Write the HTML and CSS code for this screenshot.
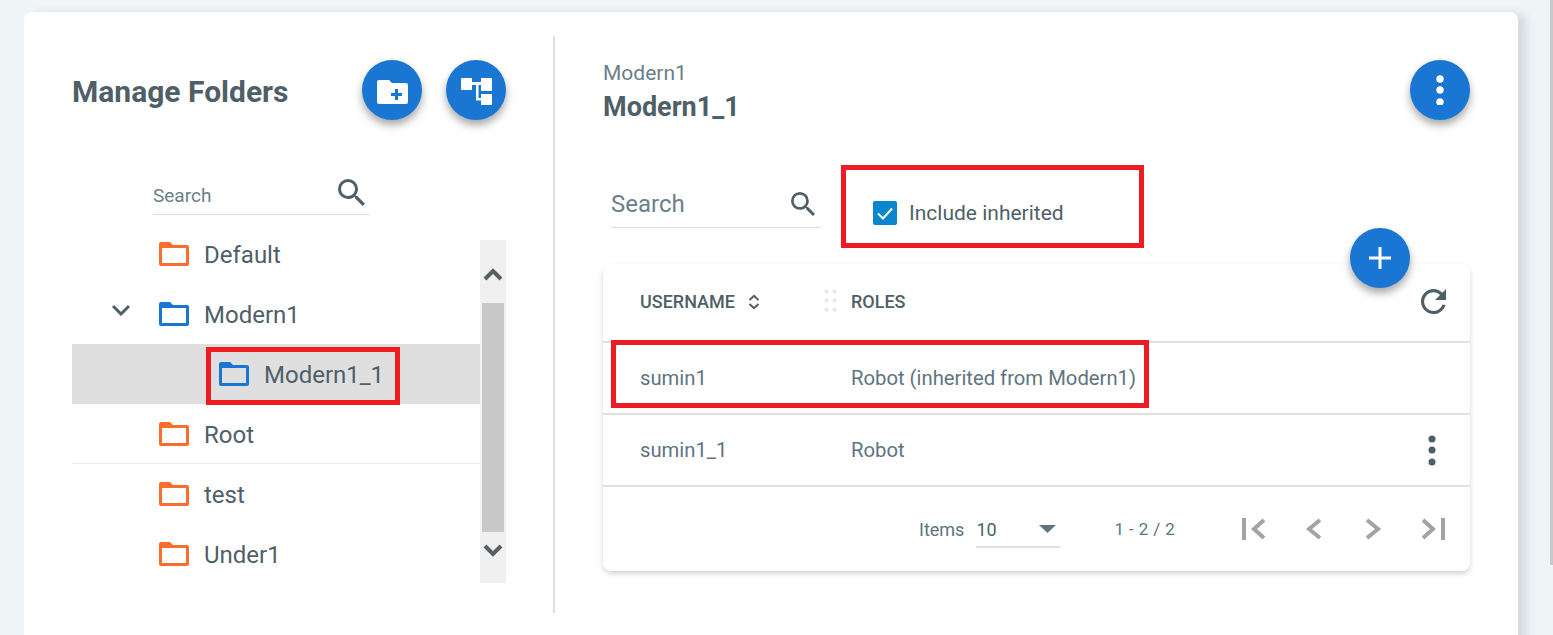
FILE: index.html
```html
<!DOCTYPE html>
<html lang="en">
<head>
<meta charset="utf-8">
<title>Manage Folders</title>
<link rel="stylesheet" href="styles.css">
</head>
<body>
<svg class="defs" width="0" height="0" aria-hidden="true">
  <symbol id="folder" viewBox="0 0 30 24"><path fill-rule="evenodd" d="M2 0h9l3 3h14a2 2 0 0 1 2 2v17a2 2 0 0 1-2 2H2a2 2 0 0 1-2-2V2a2 2 0 0 1 2-2zM3 6v15h24V6z"/></symbol>
  <symbol id="search" viewBox="3 3 17.5 17.5"><path d="M15.5 14h-.79l-.28-.27A6.471 6.471 0 0 0 16 9.5 6.5 6.5 0 1 0 9.5 16c1.61 0 3.09-.59 4.23-1.57l.27.28v.79l5 4.99L20.49 19l-4.99-5zm-6 0C7.01 14 5 11.99 5 9.5S7.01 5 9.5 5 14 7.01 14 9.5 11.99 14 9.5 14z"/></symbol>
</svg>
<div class="page">
  <main class="card">
    <section class="left">
      <div class="left-head">
        <h1 class="title">Manage Folders</h1>
        <div class="fabs">
          <button class="fab" aria-label="Add folder">
            <svg class="fab-ico" width="31" height="24" viewBox="0 0 31 24"><path fill="#fff" d="M2 0h10l3 3h14a2 2 0 0 1 2 2v17a2 2 0 0 1-2 2H2a2 2 0 0 1-2-2V2a2 2 0 0 1 2-2z"/><path fill="#1976d2" d="M18 9h3v4h4v3h-4v4h-3v-4h-4v-3h4z"/></svg>
          </button>
          <button class="fab" aria-label="Folder tree">
            <svg class="fab-ico" width="31" height="27" viewBox="0 0 31 27"><path fill="#fff" d="M0 0h11v12H0zM20 0h11v13H20zM20 16h11v11H20zM11 4h9v3h-2.500v13H20v2.500h-5V7h-4z"/></svg>
          </button>
        </div>
      </div>
      <div class="tree-search">
        <span class="tree-search-label">Search</span>
        <svg class="tree-search-icon"><use href="#search"/></svg>
      </div>
      <div class="tree-wrap">
        <ul class="tree">
          <li class="node"><svg class="folder orange"><use href="#folder"/></svg><span>Default</span></li>
          <li class="node">
            <svg class="caret" width="20" height="12" viewBox="0 0 20 12"><path d="M2 2l8 8 8-8" fill="none" stroke="#4f5f67" stroke-width="3"/></svg>
            <svg class="folder blue"><use href="#folder"/></svg><span>Modern1</span>
          </li>
          <li class="node child selected"><svg class="folder blue"><use href="#folder"/></svg><span>Modern1_1</span></li>
          <li class="node ruled"><svg class="folder orange"><use href="#folder"/></svg><span>Root</span></li>
          <li class="node"><svg class="folder orange"><use href="#folder"/></svg><span>test</span></li>
          <li class="node"><svg class="folder orange"><use href="#folder"/></svg><span>Under1</span></li>
        </ul>
        <div class="scrollbar">
          <svg class="arrow" width="20" height="14" viewBox="0 0 20 14"><path d="M2 12l8-8 8 8" fill="none" stroke="#565f64" stroke-width="4"/></svg>
          <div class="thumb"></div>
          <svg class="arrow" width="20" height="14" viewBox="0 0 20 14"><path d="M2 2l8 8 8-8" fill="none" stroke="#565f64" stroke-width="4"/></svg>
        </div>
      </div>
    </section>
    <div class="divider"></div>
    <section class="right">
      <header class="right-head">
        <div>
          <div class="crumb">Modern1</div>
          <h2 class="sub">Modern1_1</h2>
        </div>
        <button class="fab" aria-label="More">
          <svg width="8" height="30" viewBox="0 0 8 30"><g fill="#fff"><circle cx="4" cy="4" r="3.7"/><circle cx="4" cy="15" r="3.7"/><circle cx="4" cy="27" r="3.7"/></g></svg>
        </button>
      </header>
      <div class="tools">
        <div class="user-search">
          <span class="user-search-label">Search</span>
          <svg class="user-search-icon"><use href="#search"/></svg>
        </div>
        <label class="check">
          <span class="box"><svg width="24" height="24" viewBox="0 0 24 24"><path d="M5 12.500l5 5 9-10" fill="none" stroke="#fff" stroke-width="2"/></svg></span>
          Include inherited
        </label>
      </div>
      <div class="table">
        <button class="fab add" aria-label="Add">
          <svg width="22" height="22" viewBox="0 0 22 22"><path fill="#fff" d="M9.500 0h3v9.500h9.500v3h-9.500v9.500h-3v-9.500H0v-3h9.500z"/></svg>
        </button>
        <div class="row head">
          <div class="cell user">USERNAME
            <svg class="sort" width="12" height="16" viewBox="0 0 12 16"><path d="M1.500 6L6 1.800 10.500 6M1.500 10L6 14.200 10.500 10" fill="none" stroke="#4f5f67" stroke-width="2"/></svg>
          </div>
          <svg class="grip" width="13" height="23" viewBox="0 0 13 23"><g fill="#e6e6e6"><path d="M2.500 0l2.500 2.500L2.500 5 0 2.500zM10.500 0l2.500 2.500-2.500 2.500L8 2.500zM2.500 9l2.500 2.500L2.500 14 0 11.500zM10.500 9l2.500 2.500-2.500 2.500L8 11.500zM2.500 18l2.500 2.500L2.500 23 0 20.500zM10.500 18l2.500 2.500-2.500 2.500L8 20.500z"/></g></svg>
          <div class="cell roles">ROLES</div>
          <svg class="refresh" width="25" height="25" viewBox="4 4 16 16"><path fill="#4f5f67" d="M17.650 6.350C16.200 4.900 14.210 4 12 4c-4.420 0-7.990 3.580-7.990 8s3.570 8 7.990 8c3.730 0 6.840-2.550 7.730-6h-2.080c-.82 2.330-3.040 4-5.650 4-3.310 0-6-2.690-6-6s2.690-6 6-6c1.660 0 3.140.69 4.220 1.780L13 11h7V4l-2.350 2.350z"/></svg>
        </div>
        <div class="row body">
          <div class="cell user">sumin1</div>
          <div class="cell roles">Robot (inherited from Modern1)</div>
        </div>
        <div class="row body">
          <div class="cell user">sumin1_1</div>
          <div class="cell roles">Robot</div>
          <svg class="kebab" width="8" height="31" viewBox="0 0 8 31"><g fill="#4f5f67"><circle cx="4" cy="4" r="3.500"/><circle cx="4" cy="15" r="3.500"/><circle cx="4" cy="27" r="3.500"/></g></svg>
        </div>
        <footer class="pager">
          <span class="items">Items</span>
          <div class="select"><span>10</span><svg width="17" height="8" viewBox="0 0 17 8"><path fill="#607480" d="M0 0h17L8.500 8z"/></svg></div>
          <span class="range">1 - 2 / 2</span>
          <div class="pager-btns">
            <svg width="24" height="22" viewBox="0 0 24 22"><path d="M2 0v22" stroke="#a3a3a3" stroke-width="4"/><path d="M22 2L12 11l10 9" fill="none" stroke="#a3a3a3" stroke-width="4"/></svg>
            <svg width="17" height="22" viewBox="0 0 17 22"><path d="M15 2L4 11l11 9" fill="none" stroke="#a3a3a3" stroke-width="4"/></svg>
            <svg width="17" height="22" viewBox="0 0 17 22"><path d="M2 2l11 9-11 9" fill="none" stroke="#a3a3a3" stroke-width="4"/></svg>
            <svg width="24" height="22" viewBox="0 0 24 22"><path d="M22 0v22" stroke="#a3a3a3" stroke-width="4"/><path d="M2 2l10 9-10 9" fill="none" stroke="#a3a3a3" stroke-width="4"/></svg>
          </div>
        </footer>
      </div>
    </section>
    <div class="mark mark-check"></div>
    <div class="mark mark-row"></div>
    <div class="mark mark-node"></div>
  </main>
  <div class="page-scroll"></div>
</div>
</body>
</html>
```

FILE: styles.css
```css
* { box-sizing: border-box; }
html, body { height: 100%; }
body {
  margin: 0;
  background: #eff4f7;
  font-family: Roboto, "Liberation Sans", sans-serif;
  color: #4f5f67;
  overflow: hidden;
}
.defs { position: absolute; }
.page { display: flex; justify-content: space-between; height: 635px; padding-left: 24px; }
.card {
  position: relative;
  display: flex;
  width: 1494px;
  height: 650px;
  margin-top: 12px;
  padding-top: 24px;
  background: #fff;
  border-radius: 8px;
  box-shadow: 8px 2px 10px rgba(60, 80, 90, .16);
}
.page-scroll { width: 3px; height: 565px; background: #c9c9c9; }

.left { width: 481px; margin-left: 48px; flex: none; }
.left-head { display: flex; justify-content: space-between; align-items: center; height: 60px; margin-top: 24px; width: 434px; }
.title { margin: 4px 0 0; font-size: 30px; font-weight: 700; line-height: 56px; }
.fabs { display: flex; gap: 24px; }
.fab {
  display: flex;
  align-items: center;
  justify-content: center;
  width: 60px;
  height: 60px;
  padding: 0;
  border: 0;
  border-radius: 50%;
  background: #1976d2;
  box-shadow: 0 5px 8px rgba(0, 0, 0, .35);
  flex: none;
}
.fab-ico { margin-top: 3px; }
.tree-search {
  display: flex;
  align-items: center;
  justify-content: space-between;
  width: 217px;
  height: 35px;
  margin: 60px 0 0 81px;
  padding-right: 5px;
  border-bottom: 1px solid #dcdfe1;
}
.tree-search-label { font-size: 19px; color: #6a7f8b; padding-bottom: 3px; }
.tree-search-icon { width: 27px; height: 27px; fill: #4f5f67; margin-top: -9px; }

.tree-wrap { display: flex; margin-top: 9px; width: 434px; }
.tree { list-style: none; margin: 0; padding: 0; width: 408px; flex: none; }
.node {
  position: relative;
  display: flex;
  align-items: center;
  gap: 15px;
  height: 60px;
  padding-left: 87px;
  font-size: 24px;
}
.node span { padding-top: 1px; }
.folder { width: 30px; height: 24px; flex: none; }
.orange { fill: #ff6d2d; }
.blue { fill: #1976d2; }
.caret { position: absolute; left: 39px; top: 20px; }
.child { padding-left: 147px; }
.selected { background: #dfdfdf; }
.ruled { box-shadow: inset 0 -1px #eceeef; }
.scrollbar {
  display: flex;
  flex-direction: column;
  align-items: center;
  width: 26px;
  height: 343px;
  margin-top: 16px;
  padding-top: 27px;
  background: #f0f0f0;
}
.thumb { width: 22px; height: 229px; margin: 22px 0 12px; background: #c8c8c8; }
.arrow { flex: none; }

.divider { width: 2px; height: 577px; background: #dcdfe1; flex: none; }
.right { width: 867px; margin-left: 48px; flex: none; }
.right-head { display: flex; justify-content: space-between; align-items: flex-start; height: 60px; margin-top: 24px; }
.crumb { font-size: 21px; line-height: 25px; color: #6a7f8b; padding-top: 1px; }
.sub { margin: 5px 0 0; font-size: 27px; line-height: 32px; font-weight: 700; }
.tools { display: flex; align-items: flex-start; height: 144px; padding: 0 0 0 8px; }
.user-search {
  display: flex;
  align-items: center;
  justify-content: space-between;
  width: 210px;
  height: 48px;
  margin-top: 60px;
  padding: 1px 6px 0 0;
  border-bottom: 1px solid #dcdfe1;
}
.user-search-label { font-size: 24px; color: #6a7f8b; }
.user-search-icon { width: 24px; height: 24px; fill: #4f5f67; margin-top: -1px; }
.check {
  display: flex;
  align-items: center;
  gap: 12px;
  height: 24px;
  margin: 81px 0 0 52px;
  font-size: 21px;
}
.box { width: 24px; height: 24px; border-radius: 2px; background: #0a86d0; display: block; }
.box svg { display: block; }

.table {
  position: relative;
  height: 307px;
  background: #fff;
  border-radius: 8px;
  box-shadow: 0 3px 6px -1px rgba(0, 0, 0, .22);
}
.add { position: absolute; top: -36px; right: 60px; }
.row {
  position: relative;
  display: flex;
  align-items: center;
  padding-left: 37px;
  border-bottom: 2px solid #e0e0e0;
}
.head { height: 79px; font-size: 18px; font-weight: 500; padding-bottom: 2px; }
.body { height: 72px; font-size: 20.250px; color: #607480; }
.cell.user { width: 211px; flex: none; display: flex; align-items: center; gap: 13px; }
.sort { flex: none; }
.grip { position: absolute; left: 221px; top: 25px; }
.refresh { margin-left: auto; margin-right: 24px; }
.kebab { margin-left: auto; margin-right: 34px; }
.pager { display: flex; align-items: center; height: 84px; padding-left: 316px; font-size: 18px; color: #607480; }
.select {
  display: flex;
  align-items: center;
  justify-content: space-between;
  width: 84px;
  height: 36px;
  margin-left: 12px;
  padding-right: 4px;
  font-size: 18px;
  border-bottom: 2px solid #e0e0e0;
  position: relative;
  top: 1px;
}
.select span { color: #4f5f67; }
.range { width: 109px; margin-left: 54px; font-size: 17px; letter-spacing: .4px; }
.pager-btns { display: grid; grid-template-columns: repeat(4, 59.500px); justify-items: center; align-items: center; margin-left: 1px; }
.pager-btns svg { display: block; }

.mark { position: absolute; border: 5px solid #ed1c24; pointer-events: none; }
.mark-check { left: 817px; top: 153px; width: 303px; height: 83px; }
.mark-row { left: 587px; top: 328px; width: 538px; height: 68px; }
.mark-node { left: 182px; top: 335px; width: 194px; height: 58px; }
```
